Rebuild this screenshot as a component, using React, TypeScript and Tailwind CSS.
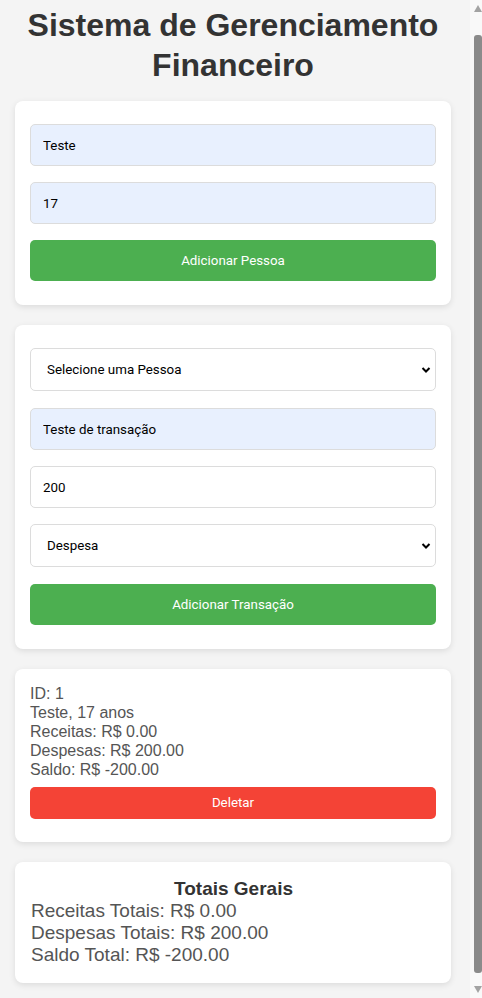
const inputCls =
  "block w-full h-[42px] px-[12px] border border-[#dcdcdc] rounded-[5px] text-[13.33px] text-black outline-none"

const cardCls = "bg-white rounded-lg shadow-[0_2px_6px_rgba(0,0,0,0.1)] px-[15px]"

function Chevron() {
  return (
    <svg
      className="pointer-events-none absolute right-[5px] top-1/2 -translate-y-1/2"
      width="10"
      height="7"
      viewBox="0 0 10 7"
    >
      <path d="M1.5 1.5 L5 5 L8.5 1.5" fill="none" stroke="#000" strokeWidth="2" />
    </svg>
  )
}

function Select({ label }: { label: string }) {
  return (
    <div className="relative mb-[1px]">
      <select className="block w-full h-[43px] pl-[16px] pr-[24px] bg-white border border-[#dcdcdc] rounded-[5px] text-[13.33px] text-black appearance-none outline-none">
        <option>{label}</option>
      </select>
      <Chevron />
    </div>
  )
}

// barra de rolagem da janela
function Scrollbar() {
  return (
    <div className="w-[15px] h-full flex">
      <div className="w-[3px] bg-[#f4f4f4]" />
      <div className="flex-1 bg-[#f9f9f9] flex flex-col items-end">
        <div className="h-[17px] w-[8px] flex items-center justify-center">
          <svg width="8" height="7" viewBox="0 0 8 7">
            <path d="M4 0 L8 7 L0 7 Z" fill="#a3a3a3" />
          </svg>
        </div>
        <div className="mt-[18px] h-[938px] w-[8px] rounded-t-[3px] rounded-b-[3px] bg-[#8b8b8b]" />
        <div className="mt-[8px] h-[17px] w-[8px] flex items-center justify-center">
          <svg width="8" height="7" viewBox="0 0 8 7">
            <path d="M0 0 L8 0 L4 7 Z" fill="#a3a3a3" />
          </svg>
        </div>
      </div>
    </div>
  )
}

export default function App() {
  return (
    <div className="h-screen overflow-hidden flex bg-[#f4f4f4] font-['Liberation_Sans',Arial,sans-serif]">
      <div className="w-[467px] pl-[15px] pr-[16px] pt-[5px]">
        {/* Titulo */}
        <h1 className="text-center text-[32px] leading-[40px] font-bold text-[#333] mb-[16px]">
          Sistema de Gerenciamento Financeiro
        </h1>

        {/* Pessoa */}
        <div className={cardCls + " pt-[23px] pb-[24px] flex flex-col gap-[16px] font-['Roboto',sans-serif]"}>
          <input className={inputCls + " bg-[#e8f0fe]"} defaultValue="Teste" />
          <input className={inputCls + " bg-[#e8f0fe]"} defaultValue="17" />
          <button className="h-[41px] w-full rounded-[5px] bg-[#4caf50] text-white text-[13.33px]">
            Adicionar Pessoa
          </button>
        </div>

        {/* Transacao */}
        <div className={cardCls + " mt-[20px] pt-[23px] pb-[24px] flex flex-col gap-[16px] font-['Roboto',sans-serif]"}>
          <Select label="Selecione uma Pessoa" />
          <input className={inputCls + " bg-[#e8f0fe]"} defaultValue="Teste de transação" />
          <input className={inputCls + " bg-white"} defaultValue="200" />
          <Select label="Despesa" />
          <button className="h-[41px] w-full rounded-[5px] bg-[#4caf50] text-white text-[13.33px]">
            Adicionar Transação
          </button>
        </div>

        {/* Lista de pessoas */}
        <div className={cardCls + " mt-[20px] pt-[15px] pb-[23px]"}>
          <div className="text-[16px] leading-[19px] text-[#555]">
            <div>ID: 1</div>
            <div>Teste, 17 anos</div>
            <div>Receitas: R$ 0.00</div>
            <div>Despesas: R$ 200.00</div>
            <div>Saldo: R$ -200.00</div>
          </div>
          <button className="mt-[8px] h-[32px] w-full rounded-[5px] bg-[#f44336] text-white text-[13.33px] font-['Roboto',sans-serif]">
            Deletar
          </button>
        </div>

        {/* Totais */}
        <div className={cardCls + " mt-[20px] pl-[16px] pt-[16px] pb-[17px] leading-[22px]"}>
          <h3 className="text-center text-[19px] font-bold text-[#333]">Totais Gerais</h3>
          <div className="text-[19px] text-[#555]">
            <div>Receitas Totais: R$ 0.00</div>
            <div>Despesas Totais: R$ 200.00</div>
            <div>Saldo Total: R$ -200.00</div>
          </div>
        </div>
      </div>
      <Scrollbar />
    </div>
  )
}
